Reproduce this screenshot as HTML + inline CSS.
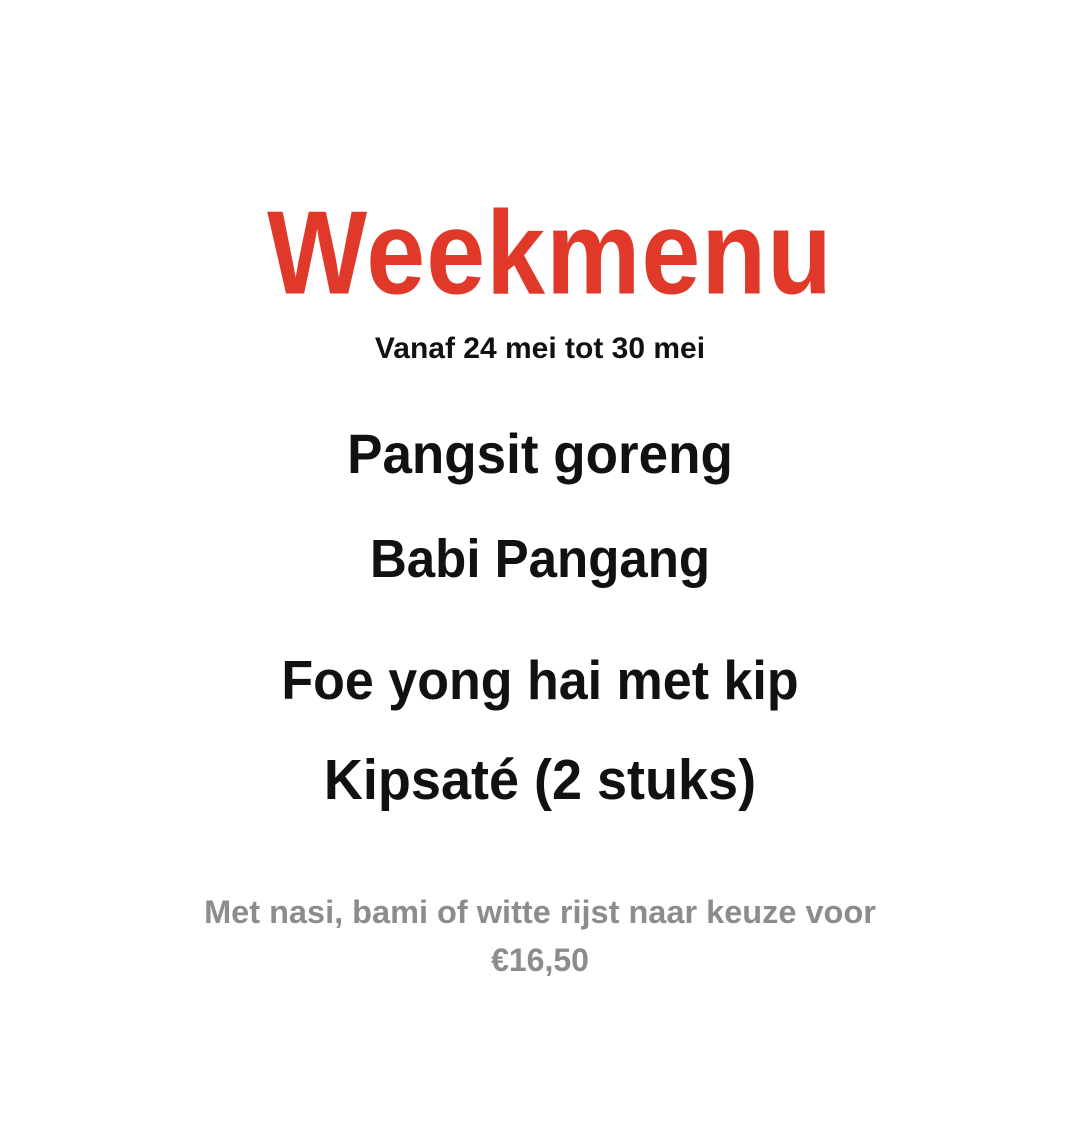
<!DOCTYPE html>
<html><head><meta charset="utf-8"><style>
html,body{margin:0;padding:0;background:#fff;}
body{width:1080px;height:1132px;position:relative;overflow:hidden;font-family:"Liberation Sans",sans-serif;font-weight:bold;}
.l{position:absolute;left:0;width:1080px;text-align:center;white-space:nowrap;line-height:1;}
</style></head><body>
<div class="l" style="top:194px;left:10px;font-size:106px;color:#e0392a;transform:scaleY(1.12);transform-origin:center top;letter-spacing:1px;">Weekmenu</div>
<div class="l" style="top:334px;font-size:30px;color:#111;">Vanaf 24 mei tot 30 mei</div>
<div class="l" style="top:428px;font-size:53px;color:#111;transform:scaleY(1.05);">Pangsit goreng</div>
<div class="l" style="top:533px;font-size:51px;color:#111;transform:scaleY(1.05);">Babi Pangang</div>
<div class="l" style="top:655px;font-size:52px;color:#111;transform:scaleY(1.05);">Foe yong hai met kip</div>
<div class="l" style="top:753px;font-size:54px;color:#111;transform:scaleY(1.05);">Kipsaté (2 stuks)</div>
<div class="l" style="top:896px;font-size:32.5px;color:#8c8c8c;">Met nasi, bami of witte rijst naar keuze voor</div>
<div class="l" style="top:944px;font-size:32px;color:#8c8c8c;">€16,50</div>
</body></html>
